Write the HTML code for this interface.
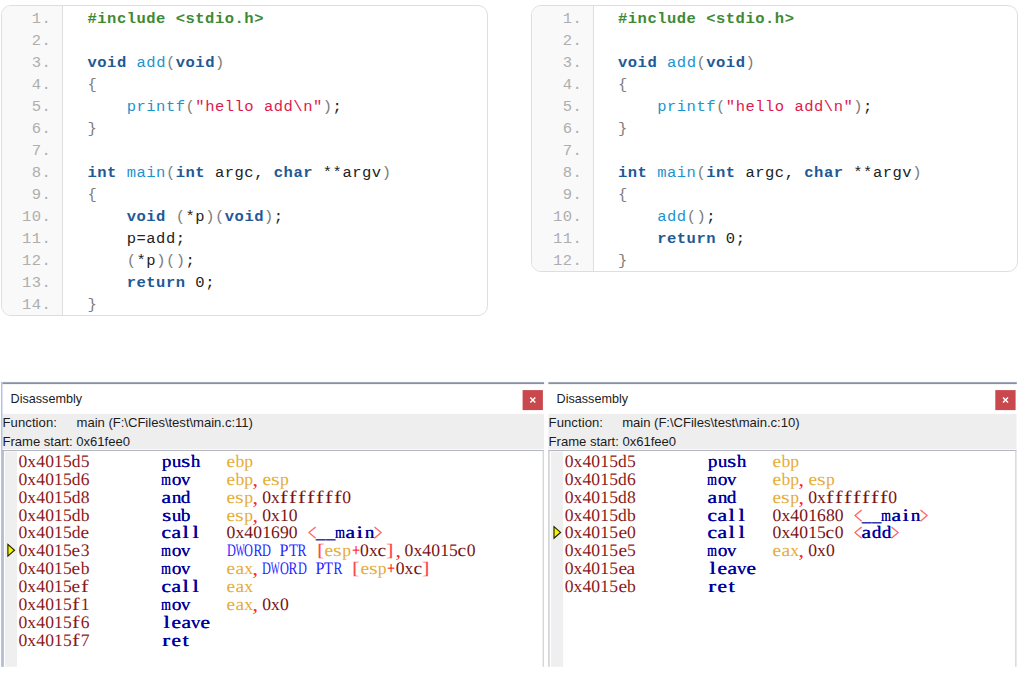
<!DOCTYPE html>
<html><head><meta charset="utf-8"><title>disassembly compare</title>
<style>
html,body{margin:0;padding:0;background:#fff;}
body{width:1025px;height:674px;position:relative;overflow:hidden;font-family:"Liberation Sans",sans-serif;}
.cb{position:absolute;border:1px solid #dedede;border-radius:10px;background:#fff;overflow:hidden;
  font-family:"Liberation Mono",monospace;font-size:15.5px;letter-spacing:0.5px;line-height:22px;color:#222;}
.gut{position:absolute;left:0;top:0;width:60px;background:#f9f9f9;border-right:1px solid #dedede;}
.ln{position:relative;height:22px;white-space:pre;}
.no{position:absolute;left:0;top:2.4px;width:49.4px;text-align:right;color:#aeaeae;}
.cd{position:absolute;left:85.5px;top:2.4px;}
.k{color:#1e5a96;font-weight:bold;}
.f{color:#1b93cf;}
.g{color:#7d7d7d;}
.s{color:#dd1a4e;}
.pp{color:#3e8a34;font-weight:bold;}
.ttl{position:absolute;top:392.2px;font-size:12.6px;line-height:15px;color:#1c1c1c;white-space:pre;}
.lbl{position:absolute;letter-spacing:-0.03px;font-size:13.1px;line-height:15px;color:#1c1c1c;white-space:pre;}
.chrome{position:absolute;left:0;top:0;}
i{position:absolute;text-rendering:geometricPrecision;font-style:normal;font-family:"Liberation Serif",serif;font-size:17.6px;line-height:0;white-space:pre;transform-origin:50% 50%;}
</style></head>
<body>
<div class="cb" style="left:1px;top:5px;width:485px;height:308.84px">
<div class="gut" style="height:308.84px;width:60px"></div>
<div class="ln"><span class="no" style="width:49.4px">1.</span><span class="cd" style="left:85.5px"><span class="pp">#include &lt;stdio.h&gt;</span></span></div>
<div class="ln"><span class="no" style="width:49.4px">2.</span><span class="cd" style="left:85.5px"></span></div>
<div class="ln"><span class="no" style="width:49.4px">3.</span><span class="cd" style="left:85.5px"><span class="k">void</span> <span class="f">add</span><span class="g">(</span><span class="k">void</span><span class="g">)</span></span></div>
<div class="ln"><span class="no" style="width:49.4px">4.</span><span class="cd" style="left:85.5px"><span class="g">{</span></span></div>
<div class="ln"><span class="no" style="width:49.4px">5.</span><span class="cd" style="left:85.5px">    <span class="f">printf</span><span class="g">(</span><span class="s">"hello add\n"</span><span class="g">)</span>;</span></div>
<div class="ln"><span class="no" style="width:49.4px">6.</span><span class="cd" style="left:85.5px"><span class="g">}</span></span></div>
<div class="ln"><span class="no" style="width:49.4px">7.</span><span class="cd" style="left:85.5px"></span></div>
<div class="ln"><span class="no" style="width:49.4px">8.</span><span class="cd" style="left:85.5px"><span class="k">int</span> <span class="f">main</span><span class="g">(</span><span class="k">int</span> argc, <span class="k">char</span> **argv<span class="g">)</span></span></div>
<div class="ln"><span class="no" style="width:49.4px">9.</span><span class="cd" style="left:85.5px"><span class="g">{</span></span></div>
<div class="ln"><span class="no" style="width:49.4px">10.</span><span class="cd" style="left:85.5px">    <span class="k">void</span> <span class="g">(</span>*p<span class="g">)</span><span class="g">(</span><span class="k">void</span><span class="g">)</span>;</span></div>
<div class="ln"><span class="no" style="width:49.4px">11.</span><span class="cd" style="left:85.5px">    p=add;</span></div>
<div class="ln"><span class="no" style="width:49.4px">12.</span><span class="cd" style="left:85.5px">    <span class="g">(</span>*p<span class="g">)</span><span class="g">()</span>;</span></div>
<div class="ln"><span class="no" style="width:49.4px">13.</span><span class="cd" style="left:85.5px">    <span class="k">return</span> 0;</span></div>
<div class="ln"><span class="no" style="width:49.4px">14.</span><span class="cd" style="left:85.5px"><span class="g">}</span></span></div>
</div>
<div class="cb" style="left:531px;top:5px;width:485px;height:264.72px">
<div class="gut" style="height:264.72px;width:61px"></div>
<div class="ln"><span class="no" style="width:50.4px">1.</span><span class="cd" style="left:86px"><span class="pp">#include &lt;stdio.h&gt;</span></span></div>
<div class="ln"><span class="no" style="width:50.4px">2.</span><span class="cd" style="left:86px"></span></div>
<div class="ln"><span class="no" style="width:50.4px">3.</span><span class="cd" style="left:86px"><span class="k">void</span> <span class="f">add</span><span class="g">(</span><span class="k">void</span><span class="g">)</span></span></div>
<div class="ln"><span class="no" style="width:50.4px">4.</span><span class="cd" style="left:86px"><span class="g">{</span></span></div>
<div class="ln"><span class="no" style="width:50.4px">5.</span><span class="cd" style="left:86px">    <span class="f">printf</span><span class="g">(</span><span class="s">"hello add\n"</span><span class="g">)</span>;</span></div>
<div class="ln"><span class="no" style="width:50.4px">6.</span><span class="cd" style="left:86px"><span class="g">}</span></span></div>
<div class="ln"><span class="no" style="width:50.4px">7.</span><span class="cd" style="left:86px"></span></div>
<div class="ln"><span class="no" style="width:50.4px">8.</span><span class="cd" style="left:86px"><span class="k">int</span> <span class="f">main</span><span class="g">(</span><span class="k">int</span> argc, <span class="k">char</span> **argv<span class="g">)</span></span></div>
<div class="ln"><span class="no" style="width:50.4px">9.</span><span class="cd" style="left:86px"><span class="g">{</span></span></div>
<div class="ln"><span class="no" style="width:50.4px">10.</span><span class="cd" style="left:86px">    <span class="f">add</span><span class="g">()</span>;</span></div>
<div class="ln"><span class="no" style="width:50.4px">11.</span><span class="cd" style="left:86px">    <span class="k">return</span> 0;</span></div>
<div class="ln"><span class="no" style="width:50.4px">12.</span><span class="cd" style="left:86px"><span class="g">}</span></span></div>
</div>
<svg class="chrome" width="1025" height="674" viewBox="0 0 1025 674"><rect x="2.30" y="413.90" width="541.60" height="35.40" fill="#eeeeee"/><rect x="1.00" y="381.90" width="543.10" height="1.00" fill="#c3cde4"/><rect x="2.30" y="382.40" width="541.80" height="1.70" fill="#8d8f98"/><rect x="1.00" y="382.00" width="1.50" height="284.80" fill="#b6c3e0"/><rect x="2.30" y="450.00" width="541.40" height="1.00" fill="#b4b7c2"/><rect x="2.30" y="450.00" width="1.50" height="216.80" fill="#a9b2c8"/><rect x="542.70" y="450.00" width="1.00" height="216.80" fill="#c4c6ce"/><rect x="4.90" y="451.50" width="12.10" height="215.30" fill="#efefef"/><rect x="522.60" y="390.10" width="20.30" height="20.00" fill="#c8484e"/><path d="M530.30 397.5 l5 5 m0 -5 l-5 5" stroke="#fff" stroke-width="1.5" fill="none"/><path d="M7.90 544.45 l6.6 5.8 l-6.6 5.8 Z" fill="#f4f400" stroke="#1a1a00" stroke-width="1.1" stroke-linejoin="miter"/></svg>
<div class="ttl" style="left:10.6px">Disassembly</div>
<div class="lbl" style="left:2.5px;top:415.2px;letter-spacing:0.07px">Function:</div>
<div class="lbl" style="left:76.6px;top:415.2px">main (F:\CFiles\test\main.c:11)</div>
<div class="lbl" style="left:2.5px;top:434px">Frame start: 0x61fee0</div>
<i style="left:18.45px;top:461.31px;color:#8b1a1a;">0</i><i style="left:27.35px;top:461.31px;color:#8b1a1a;">x</i><i style="left:36.25px;top:461.31px;color:#8b1a1a;">4</i><i style="left:45.15px;top:461.31px;color:#8b1a1a;">0</i><i style="left:54.05px;top:461.31px;color:#8b1a1a;">1</i><i style="left:62.95px;top:461.31px;color:#8b1a1a;">5</i><i style="left:71.85px;top:461.31px;color:#8b1a1a;">d</i><i style="left:80.75px;top:461.31px;color:#8b1a1a;">5</i><i style="left:161.80px;top:461.31px;color:#00009c;text-shadow:0.4px 0 0 #00009c;transform:scale(1.079,1.000);">p</i><i style="left:171.59px;top:461.31px;color:#00009c;text-shadow:0.4px 0 0 #00009c;transform:scale(1.079,1.000);">u</i><i style="left:182.35px;top:461.31px;color:#00009c;text-shadow:0.4px 0 0 #00009c;transform:scale(1.300,1.000);">s</i><i style="left:191.16px;top:461.31px;color:#00009c;text-shadow:0.4px 0 0 #00009c;transform:scale(1.079,1.000);">h</i><i style="left:227.04px;top:461.31px;color:#e6ac38;transform:scale(1.105,1.000);">e</i><i style="left:235.45px;top:461.31px;color:#e6ac38;">b</i><i style="left:244.35px;top:461.31px;color:#e6ac38;">p</i>
<i style="left:18.45px;top:479.31px;color:#8b1a1a;">0</i><i style="left:27.35px;top:479.31px;color:#8b1a1a;">x</i><i style="left:36.25px;top:479.31px;color:#8b1a1a;">4</i><i style="left:45.15px;top:479.31px;color:#8b1a1a;">0</i><i style="left:54.05px;top:479.31px;color:#8b1a1a;">1</i><i style="left:62.95px;top:479.31px;color:#8b1a1a;">5</i><i style="left:71.85px;top:479.31px;color:#8b1a1a;">d</i><i style="left:80.75px;top:479.31px;color:#8b1a1a;">6</i><i style="left:159.35px;top:479.31px;color:#00009c;text-shadow:0.4px 0 0 #00009c;transform:scale(0.715,1.000);">m</i><i style="left:171.59px;top:479.31px;color:#00009c;text-shadow:0.4px 0 0 #00009c;transform:scale(1.079,1.000);">o</i><i style="left:181.38px;top:479.31px;color:#00009c;text-shadow:0.4px 0 0 #00009c;transform:scale(1.079,1.000);">v</i><i style="left:227.04px;top:479.31px;color:#e6ac38;transform:scale(1.105,1.000);">e</i><i style="left:235.45px;top:479.31px;color:#e6ac38;">b</i><i style="left:244.35px;top:479.31px;color:#e6ac38;">p</i><i style="left:253.45px;top:479.31px;color:#ff2020;transform:scale(1.250,1.100);">,</i><i style="left:262.64px;top:479.31px;color:#e6ac38;transform:scale(1.105,1.000);">e</i><i style="left:272.03px;top:479.31px;color:#e6ac38;transform:scale(1.260,1.000);">s</i><i style="left:279.95px;top:479.31px;color:#e6ac38;">p</i>
<i style="left:18.45px;top:497.31px;color:#8b1a1a;">0</i><i style="left:27.35px;top:497.31px;color:#8b1a1a;">x</i><i style="left:36.25px;top:497.31px;color:#8b1a1a;">4</i><i style="left:45.15px;top:497.31px;color:#8b1a1a;">0</i><i style="left:54.05px;top:497.31px;color:#8b1a1a;">1</i><i style="left:62.95px;top:497.31px;color:#8b1a1a;">5</i><i style="left:71.85px;top:497.31px;color:#8b1a1a;">d</i><i style="left:80.75px;top:497.31px;color:#8b1a1a;">8</i><i style="left:162.29px;top:497.31px;color:#00009c;text-shadow:0.4px 0 0 #00009c;transform:scale(1.216,1.000);">a</i><i style="left:171.59px;top:497.31px;color:#00009c;text-shadow:0.4px 0 0 #00009c;transform:scale(1.079,1.000);">n</i><i style="left:181.38px;top:497.31px;color:#00009c;text-shadow:0.4px 0 0 #00009c;transform:scale(1.079,1.000);">d</i><i style="left:227.04px;top:497.31px;color:#e6ac38;transform:scale(1.105,1.000);">e</i><i style="left:236.43px;top:497.31px;color:#e6ac38;transform:scale(1.260,1.000);">s</i><i style="left:244.35px;top:497.31px;color:#e6ac38;">p</i><i style="left:253.45px;top:497.31px;color:#ff2020;transform:scale(1.250,1.100);">,</i><i style="left:262.15px;top:497.31px;color:#7a1414;">0</i><i style="left:271.05px;top:497.31px;color:#7a1414;">x</i><i style="left:281.42px;top:497.31px;color:#7a1414;transform:scale(1.300,1.000);">f</i><i style="left:290.32px;top:497.31px;color:#7a1414;transform:scale(1.300,1.000);">f</i><i style="left:299.22px;top:497.31px;color:#7a1414;transform:scale(1.300,1.000);">f</i><i style="left:308.12px;top:497.31px;color:#7a1414;transform:scale(1.300,1.000);">f</i><i style="left:317.02px;top:497.31px;color:#7a1414;transform:scale(1.300,1.000);">f</i><i style="left:325.92px;top:497.31px;color:#7a1414;transform:scale(1.300,1.000);">f</i><i style="left:334.82px;top:497.31px;color:#7a1414;transform:scale(1.300,1.000);">f</i><i style="left:342.25px;top:497.31px;color:#7a1414;">0</i>
<i style="left:18.45px;top:515.31px;color:#8b1a1a;">0</i><i style="left:27.35px;top:515.31px;color:#8b1a1a;">x</i><i style="left:36.25px;top:515.31px;color:#8b1a1a;">4</i><i style="left:45.15px;top:515.31px;color:#8b1a1a;">0</i><i style="left:54.05px;top:515.31px;color:#8b1a1a;">1</i><i style="left:62.95px;top:515.31px;color:#8b1a1a;">5</i><i style="left:71.85px;top:515.31px;color:#8b1a1a;">d</i><i style="left:80.75px;top:515.31px;color:#8b1a1a;">b</i><i style="left:162.77px;top:515.31px;color:#00009c;text-shadow:0.4px 0 0 #00009c;transform:scale(1.300,1.000);">s</i><i style="left:171.59px;top:515.31px;color:#00009c;text-shadow:0.4px 0 0 #00009c;transform:scale(1.079,1.000);">u</i><i style="left:181.38px;top:515.31px;color:#00009c;text-shadow:0.4px 0 0 #00009c;transform:scale(1.079,1.000);">b</i><i style="left:227.04px;top:515.31px;color:#e6ac38;transform:scale(1.105,1.000);">e</i><i style="left:236.43px;top:515.31px;color:#e6ac38;transform:scale(1.260,1.000);">s</i><i style="left:244.35px;top:515.31px;color:#e6ac38;">p</i><i style="left:253.45px;top:515.31px;color:#ff2020;transform:scale(1.250,1.100);">,</i><i style="left:262.15px;top:515.31px;color:#7a1414;">0</i><i style="left:271.05px;top:515.31px;color:#7a1414;">x</i><i style="left:279.95px;top:515.31px;color:#7a1414;">1</i><i style="left:288.85px;top:515.31px;color:#7a1414;">0</i>
<i style="left:18.45px;top:532.31px;color:#8b1a1a;">0</i><i style="left:27.35px;top:532.31px;color:#8b1a1a;">x</i><i style="left:36.25px;top:532.31px;color:#8b1a1a;">4</i><i style="left:45.15px;top:532.31px;color:#8b1a1a;">0</i><i style="left:54.05px;top:532.31px;color:#8b1a1a;">1</i><i style="left:62.95px;top:532.31px;color:#8b1a1a;">5</i><i style="left:71.85px;top:532.31px;color:#8b1a1a;">d</i><i style="left:81.24px;top:532.31px;color:#8b1a1a;transform:scale(1.105,1.000);">e</i><i style="left:162.29px;top:532.31px;color:#00009c;text-shadow:0.4px 0 0 #00009c;transform:scale(1.216,1.000);">c</i><i style="left:172.08px;top:532.31px;color:#00009c;text-shadow:0.4px 0 0 #00009c;transform:scale(1.216,1.000);">a</i><i style="left:183.33px;top:532.31px;color:#00009c;text-shadow:0.4px 0 0 #00009c;transform:scale(1.300,1.000);">l</i><i style="left:193.12px;top:532.31px;color:#00009c;text-shadow:0.4px 0 0 #00009c;transform:scale(1.300,1.000);">l</i><i style="left:226.55px;top:532.31px;color:#7a1414;">0</i><i style="left:235.45px;top:532.31px;color:#7a1414;">x</i><i style="left:244.35px;top:532.31px;color:#7a1414;">4</i><i style="left:253.25px;top:532.31px;color:#7a1414;">0</i><i style="left:262.15px;top:532.31px;color:#7a1414;">1</i><i style="left:271.05px;top:532.31px;color:#7a1414;">6</i><i style="left:279.95px;top:532.31px;color:#7a1414;">9</i><i style="left:288.85px;top:532.31px;color:#7a1414;">0</i><i style="left:306.99px;top:532.21px;color:#ff6a6a;text-shadow:0.3px 0 0 #ff6a6a;transform:scale(0.850,1.450);">&lt;</i><i style="left:315.99px;top:532.31px;color:#00009c;text-shadow:0.4px 0 0 #00009c;transform:scale(1.079,1.000);">_</i><i style="left:325.78px;top:532.31px;color:#00009c;text-shadow:0.4px 0 0 #00009c;transform:scale(1.079,1.000);">_</i><i style="left:333.13px;top:532.31px;color:#00009c;text-shadow:0.4px 0 0 #00009c;transform:scale(0.715,1.000);">m</i><i style="left:345.86px;top:532.31px;color:#00009c;text-shadow:0.4px 0 0 #00009c;transform:scale(1.216,1.000);">a</i><i style="left:357.11px;top:532.31px;color:#00009c;text-shadow:0.4px 0 0 #00009c;transform:scale(1.300,1.000);">i</i><i style="left:364.94px;top:532.31px;color:#00009c;text-shadow:0.4px 0 0 #00009c;transform:scale(1.079,1.000);">n</i><i style="left:373.43px;top:532.21px;color:#ff6a6a;text-shadow:0.3px 0 0 #ff6a6a;transform:scale(0.850,1.450);">&gt;</i>
<i style="left:18.45px;top:550.31px;color:#8b1a1a;">0</i><i style="left:27.35px;top:550.31px;color:#8b1a1a;">x</i><i style="left:36.25px;top:550.31px;color:#8b1a1a;">4</i><i style="left:45.15px;top:550.31px;color:#8b1a1a;">0</i><i style="left:54.05px;top:550.31px;color:#8b1a1a;">1</i><i style="left:62.95px;top:550.31px;color:#8b1a1a;">5</i><i style="left:72.34px;top:550.31px;color:#8b1a1a;transform:scale(1.105,1.000);">e</i><i style="left:80.75px;top:550.31px;color:#8b1a1a;">3</i><i style="left:159.35px;top:550.31px;color:#00009c;text-shadow:0.4px 0 0 #00009c;transform:scale(0.715,1.000);">m</i><i style="left:171.59px;top:550.31px;color:#00009c;text-shadow:0.4px 0 0 #00009c;transform:scale(1.079,1.000);">o</i><i style="left:181.38px;top:550.31px;color:#00009c;text-shadow:0.4px 0 0 #00009c;transform:scale(1.079,1.000);">v</i><i style="left:224.59px;top:550.31px;color:#2424ff;transform:scale(0.700,1.000);">D</i><i style="left:231.54px;top:550.31px;color:#2424ff;transform:scale(0.536,1.000);">W</i><i style="left:242.39px;top:550.31px;color:#2424ff;transform:scale(0.700,1.000);">O</i><i style="left:251.78px;top:550.31px;color:#2424ff;transform:scale(0.758,1.000);">R</i><i style="left:260.19px;top:550.31px;color:#2424ff;transform:scale(0.700,1.000);">D</i><i style="left:279.46px;top:550.31px;color:#2424ff;transform:scale(0.909,1.000);">P</i><i style="left:287.87px;top:550.31px;color:#2424ff;transform:scale(0.828,1.000);">T</i><i style="left:296.28px;top:550.31px;color:#2424ff;transform:scale(0.758,1.000);">R</i><i style="left:317.52px;top:550.31px;color:#ff4848;transform:scale(1.300,1.000);">[</i><i style="left:324.94px;top:550.31px;color:#e6ac38;transform:scale(1.105,1.000);">e</i><i style="left:334.33px;top:550.31px;color:#e6ac38;transform:scale(1.260,1.000);">s</i><i style="left:342.25px;top:550.31px;color:#e6ac38;">p</i><i style="left:350.59px;top:550.31px;color:#ff3030;text-shadow:0.3px 0 0 #ff3030;transform:scale(0.800,1.000);">+</i><i style="left:360.05px;top:550.31px;color:#7a1414;">0</i><i style="left:368.95px;top:550.31px;color:#7a1414;">x</i><i style="left:378.34px;top:550.31px;color:#7a1414;transform:scale(1.105,1.000);">c</i><i style="left:387.22px;top:550.31px;color:#ff4848;transform:scale(1.300,1.000);">]</i><i style="left:395.85px;top:550.31px;color:#ff2020;transform:scale(1.250,1.100);">,</i><i style="left:404.55px;top:550.31px;color:#7a1414;">0</i><i style="left:413.45px;top:550.31px;color:#7a1414;">x</i><i style="left:422.35px;top:550.31px;color:#7a1414;">4</i><i style="left:431.25px;top:550.31px;color:#7a1414;">0</i><i style="left:440.15px;top:550.31px;color:#7a1414;">1</i><i style="left:449.05px;top:550.31px;color:#7a1414;">5</i><i style="left:458.44px;top:550.31px;color:#7a1414;transform:scale(1.105,1.000);">c</i><i style="left:466.85px;top:550.31px;color:#7a1414;">0</i>
<i style="left:18.45px;top:568.31px;color:#8b1a1a;">0</i><i style="left:27.35px;top:568.31px;color:#8b1a1a;">x</i><i style="left:36.25px;top:568.31px;color:#8b1a1a;">4</i><i style="left:45.15px;top:568.31px;color:#8b1a1a;">0</i><i style="left:54.05px;top:568.31px;color:#8b1a1a;">1</i><i style="left:62.95px;top:568.31px;color:#8b1a1a;">5</i><i style="left:72.34px;top:568.31px;color:#8b1a1a;transform:scale(1.105,1.000);">e</i><i style="left:80.75px;top:568.31px;color:#8b1a1a;">b</i><i style="left:159.35px;top:568.31px;color:#00009c;text-shadow:0.4px 0 0 #00009c;transform:scale(0.715,1.000);">m</i><i style="left:171.59px;top:568.31px;color:#00009c;text-shadow:0.4px 0 0 #00009c;transform:scale(1.079,1.000);">o</i><i style="left:181.38px;top:568.31px;color:#00009c;text-shadow:0.4px 0 0 #00009c;transform:scale(1.079,1.000);">v</i><i style="left:227.04px;top:568.31px;color:#e6ac38;transform:scale(1.105,1.000);">e</i><i style="left:235.94px;top:568.31px;color:#e6ac38;transform:scale(1.105,1.000);">a</i><i style="left:244.35px;top:568.31px;color:#e6ac38;">x</i><i style="left:253.45px;top:568.31px;color:#ff2020;transform:scale(1.250,1.100);">,</i><i style="left:260.19px;top:568.31px;color:#2424ff;transform:scale(0.700,1.000);">D</i><i style="left:267.14px;top:568.31px;color:#2424ff;transform:scale(0.536,1.000);">W</i><i style="left:277.99px;top:568.31px;color:#2424ff;transform:scale(0.700,1.000);">O</i><i style="left:287.38px;top:568.31px;color:#2424ff;transform:scale(0.758,1.000);">R</i><i style="left:295.79px;top:568.31px;color:#2424ff;transform:scale(0.700,1.000);">D</i><i style="left:315.06px;top:568.31px;color:#2424ff;transform:scale(0.909,1.000);">P</i><i style="left:323.47px;top:568.31px;color:#2424ff;transform:scale(0.828,1.000);">T</i><i style="left:331.88px;top:568.31px;color:#2424ff;transform:scale(0.758,1.000);">R</i><i style="left:353.12px;top:568.31px;color:#ff4848;transform:scale(1.300,1.000);">[</i><i style="left:360.54px;top:568.31px;color:#e6ac38;transform:scale(1.105,1.000);">e</i><i style="left:369.93px;top:568.31px;color:#e6ac38;transform:scale(1.260,1.000);">s</i><i style="left:377.85px;top:568.31px;color:#e6ac38;">p</i><i style="left:386.19px;top:568.31px;color:#ff3030;text-shadow:0.3px 0 0 #ff3030;transform:scale(0.800,1.000);">+</i><i style="left:395.65px;top:568.31px;color:#7a1414;">0</i><i style="left:404.55px;top:568.31px;color:#7a1414;">x</i><i style="left:413.94px;top:568.31px;color:#7a1414;transform:scale(1.105,1.000);">c</i><i style="left:422.82px;top:568.31px;color:#ff4848;transform:scale(1.300,1.000);">]</i>
<i style="left:18.45px;top:586.31px;color:#8b1a1a;">0</i><i style="left:27.35px;top:586.31px;color:#8b1a1a;">x</i><i style="left:36.25px;top:586.31px;color:#8b1a1a;">4</i><i style="left:45.15px;top:586.31px;color:#8b1a1a;">0</i><i style="left:54.05px;top:586.31px;color:#8b1a1a;">1</i><i style="left:62.95px;top:586.31px;color:#8b1a1a;">5</i><i style="left:72.34px;top:586.31px;color:#8b1a1a;transform:scale(1.105,1.000);">e</i><i style="left:82.22px;top:586.31px;color:#8b1a1a;transform:scale(1.300,1.000);">f</i><i style="left:162.29px;top:586.31px;color:#00009c;text-shadow:0.4px 0 0 #00009c;transform:scale(1.216,1.000);">c</i><i style="left:172.08px;top:586.31px;color:#00009c;text-shadow:0.4px 0 0 #00009c;transform:scale(1.216,1.000);">a</i><i style="left:183.33px;top:586.31px;color:#00009c;text-shadow:0.4px 0 0 #00009c;transform:scale(1.300,1.000);">l</i><i style="left:193.12px;top:586.31px;color:#00009c;text-shadow:0.4px 0 0 #00009c;transform:scale(1.300,1.000);">l</i><i style="left:227.04px;top:586.31px;color:#e6ac38;transform:scale(1.105,1.000);">e</i><i style="left:235.94px;top:586.31px;color:#e6ac38;transform:scale(1.105,1.000);">a</i><i style="left:244.35px;top:586.31px;color:#e6ac38;">x</i>
<i style="left:18.45px;top:604.31px;color:#8b1a1a;">0</i><i style="left:27.35px;top:604.31px;color:#8b1a1a;">x</i><i style="left:36.25px;top:604.31px;color:#8b1a1a;">4</i><i style="left:45.15px;top:604.31px;color:#8b1a1a;">0</i><i style="left:54.05px;top:604.31px;color:#8b1a1a;">1</i><i style="left:62.95px;top:604.31px;color:#8b1a1a;">5</i><i style="left:73.32px;top:604.31px;color:#8b1a1a;transform:scale(1.300,1.000);">f</i><i style="left:80.75px;top:604.31px;color:#8b1a1a;">1</i><i style="left:159.35px;top:604.31px;color:#00009c;text-shadow:0.4px 0 0 #00009c;transform:scale(0.715,1.000);">m</i><i style="left:171.59px;top:604.31px;color:#00009c;text-shadow:0.4px 0 0 #00009c;transform:scale(1.079,1.000);">o</i><i style="left:181.38px;top:604.31px;color:#00009c;text-shadow:0.4px 0 0 #00009c;transform:scale(1.079,1.000);">v</i><i style="left:227.04px;top:604.31px;color:#e6ac38;transform:scale(1.105,1.000);">e</i><i style="left:235.94px;top:604.31px;color:#e6ac38;transform:scale(1.105,1.000);">a</i><i style="left:244.35px;top:604.31px;color:#e6ac38;">x</i><i style="left:253.45px;top:604.31px;color:#ff2020;transform:scale(1.250,1.100);">,</i><i style="left:262.15px;top:604.31px;color:#7a1414;">0</i><i style="left:271.05px;top:604.31px;color:#7a1414;">x</i><i style="left:279.95px;top:604.31px;color:#7a1414;">0</i>
<i style="left:18.45px;top:622.31px;color:#8b1a1a;">0</i><i style="left:27.35px;top:622.31px;color:#8b1a1a;">x</i><i style="left:36.25px;top:622.31px;color:#8b1a1a;">4</i><i style="left:45.15px;top:622.31px;color:#8b1a1a;">0</i><i style="left:54.05px;top:622.31px;color:#8b1a1a;">1</i><i style="left:62.95px;top:622.31px;color:#8b1a1a;">5</i><i style="left:73.32px;top:622.31px;color:#8b1a1a;transform:scale(1.300,1.000);">f</i><i style="left:80.75px;top:622.31px;color:#8b1a1a;">6</i><i style="left:163.75px;top:622.31px;color:#00009c;text-shadow:0.4px 0 0 #00009c;transform:scale(1.300,1.000);">l</i><i style="left:172.08px;top:622.31px;color:#00009c;text-shadow:0.4px 0 0 #00009c;transform:scale(1.216,1.000);">e</i><i style="left:181.87px;top:622.31px;color:#00009c;text-shadow:0.4px 0 0 #00009c;transform:scale(1.216,1.000);">a</i><i style="left:191.16px;top:622.31px;color:#00009c;text-shadow:0.4px 0 0 #00009c;transform:scale(1.079,1.000);">v</i><i style="left:201.45px;top:622.31px;color:#00009c;text-shadow:0.4px 0 0 #00009c;transform:scale(1.216,1.000);">e</i>
<i style="left:18.45px;top:640.31px;color:#8b1a1a;">0</i><i style="left:27.35px;top:640.31px;color:#8b1a1a;">x</i><i style="left:36.25px;top:640.31px;color:#8b1a1a;">4</i><i style="left:45.15px;top:640.31px;color:#8b1a1a;">0</i><i style="left:54.05px;top:640.31px;color:#8b1a1a;">1</i><i style="left:62.95px;top:640.31px;color:#8b1a1a;">5</i><i style="left:73.32px;top:640.31px;color:#8b1a1a;transform:scale(1.300,1.000);">f</i><i style="left:80.75px;top:640.31px;color:#8b1a1a;">7</i><i style="left:163.26px;top:640.31px;color:#00009c;text-shadow:0.4px 0 0 #00009c;transform:scale(1.300,1.000);">r</i><i style="left:172.08px;top:640.31px;color:#00009c;text-shadow:0.4px 0 0 #00009c;transform:scale(1.216,1.000);">e</i><i style="left:183.33px;top:640.31px;color:#00009c;text-shadow:0.4px 0 0 #00009c;transform:scale(1.300,1.000);">t</i>
<svg class="chrome" width="1025" height="674" viewBox="0 0 1025 674"><rect x="548.40" y="413.90" width="468.20" height="35.40" fill="#eeeeee"/><rect x="548.40" y="381.90" width="468.40" height="1.00" fill="#c3cde4"/><rect x="548.40" y="382.40" width="468.40" height="1.70" fill="#8d8f98"/><rect x="548.40" y="450.00" width="468.00" height="1.00" fill="#b4b7c2"/><rect x="548.40" y="450.00" width="1.10" height="216.80" fill="#b9bcc6"/><rect x="1015.40" y="450.00" width="1.00" height="216.80" fill="#c4c6ce"/><rect x="551.00" y="451.50" width="12.10" height="215.30" fill="#efefef"/><rect x="995.30" y="390.10" width="20.30" height="20.00" fill="#c8484e"/><path d="M1003.00 397.5 l5 5 m0 -5 l-5 5" stroke="#fff" stroke-width="1.5" fill="none"/><path d="M554.00 526.60 l6.6 5.8 l-6.6 5.8 Z" fill="#f4f400" stroke="#1a1a00" stroke-width="1.1" stroke-linejoin="miter"/></svg>
<div class="ttl" style="left:556.6px">Disassembly</div>
<div class="lbl" style="left:548.6px;top:415.2px;letter-spacing:0.07px">Function:</div>
<div class="lbl" style="left:622.2px;top:415.2px">main (F:\CFiles\test\main.c:10)</div>
<div class="lbl" style="left:548.6px;top:434px">Frame start: 0x61fee0</div>
<i style="left:564.65px;top:461.31px;color:#8b1a1a;">0</i><i style="left:573.55px;top:461.31px;color:#8b1a1a;">x</i><i style="left:582.45px;top:461.31px;color:#8b1a1a;">4</i><i style="left:591.35px;top:461.31px;color:#8b1a1a;">0</i><i style="left:600.25px;top:461.31px;color:#8b1a1a;">1</i><i style="left:609.15px;top:461.31px;color:#8b1a1a;">5</i><i style="left:618.05px;top:461.31px;color:#8b1a1a;">d</i><i style="left:626.95px;top:461.31px;color:#8b1a1a;">5</i><i style="left:707.79px;top:461.31px;color:#00009c;text-shadow:0.4px 0 0 #00009c;transform:scale(1.079,1.000);">p</i><i style="left:717.58px;top:461.31px;color:#00009c;text-shadow:0.4px 0 0 #00009c;transform:scale(1.079,1.000);">u</i><i style="left:728.35px;top:461.31px;color:#00009c;text-shadow:0.4px 0 0 #00009c;transform:scale(1.300,1.000);">s</i><i style="left:737.16px;top:461.31px;color:#00009c;text-shadow:0.4px 0 0 #00009c;transform:scale(1.079,1.000);">h</i><i style="left:773.04px;top:461.31px;color:#e6ac38;transform:scale(1.105,1.000);">e</i><i style="left:781.45px;top:461.31px;color:#e6ac38;">b</i><i style="left:790.35px;top:461.31px;color:#e6ac38;">p</i>
<i style="left:564.65px;top:479.31px;color:#8b1a1a;">0</i><i style="left:573.55px;top:479.31px;color:#8b1a1a;">x</i><i style="left:582.45px;top:479.31px;color:#8b1a1a;">4</i><i style="left:591.35px;top:479.31px;color:#8b1a1a;">0</i><i style="left:600.25px;top:479.31px;color:#8b1a1a;">1</i><i style="left:609.15px;top:479.31px;color:#8b1a1a;">5</i><i style="left:618.05px;top:479.31px;color:#8b1a1a;">d</i><i style="left:626.95px;top:479.31px;color:#8b1a1a;">6</i><i style="left:705.35px;top:479.31px;color:#00009c;text-shadow:0.4px 0 0 #00009c;transform:scale(0.715,1.000);">m</i><i style="left:717.58px;top:479.31px;color:#00009c;text-shadow:0.4px 0 0 #00009c;transform:scale(1.079,1.000);">o</i><i style="left:727.37px;top:479.31px;color:#00009c;text-shadow:0.4px 0 0 #00009c;transform:scale(1.079,1.000);">v</i><i style="left:773.04px;top:479.31px;color:#e6ac38;transform:scale(1.105,1.000);">e</i><i style="left:781.45px;top:479.31px;color:#e6ac38;">b</i><i style="left:790.35px;top:479.31px;color:#e6ac38;">p</i><i style="left:799.45px;top:479.31px;color:#ff2020;transform:scale(1.250,1.100);">,</i><i style="left:808.64px;top:479.31px;color:#e6ac38;transform:scale(1.105,1.000);">e</i><i style="left:818.03px;top:479.31px;color:#e6ac38;transform:scale(1.260,1.000);">s</i><i style="left:825.95px;top:479.31px;color:#e6ac38;">p</i>
<i style="left:564.65px;top:497.31px;color:#8b1a1a;">0</i><i style="left:573.55px;top:497.31px;color:#8b1a1a;">x</i><i style="left:582.45px;top:497.31px;color:#8b1a1a;">4</i><i style="left:591.35px;top:497.31px;color:#8b1a1a;">0</i><i style="left:600.25px;top:497.31px;color:#8b1a1a;">1</i><i style="left:609.15px;top:497.31px;color:#8b1a1a;">5</i><i style="left:618.05px;top:497.31px;color:#8b1a1a;">d</i><i style="left:626.95px;top:497.31px;color:#8b1a1a;">8</i><i style="left:708.29px;top:497.31px;color:#00009c;text-shadow:0.4px 0 0 #00009c;transform:scale(1.216,1.000);">a</i><i style="left:717.58px;top:497.31px;color:#00009c;text-shadow:0.4px 0 0 #00009c;transform:scale(1.079,1.000);">n</i><i style="left:727.37px;top:497.31px;color:#00009c;text-shadow:0.4px 0 0 #00009c;transform:scale(1.079,1.000);">d</i><i style="left:773.04px;top:497.31px;color:#e6ac38;transform:scale(1.105,1.000);">e</i><i style="left:782.43px;top:497.31px;color:#e6ac38;transform:scale(1.260,1.000);">s</i><i style="left:790.35px;top:497.31px;color:#e6ac38;">p</i><i style="left:799.45px;top:497.31px;color:#ff2020;transform:scale(1.250,1.100);">,</i><i style="left:808.15px;top:497.31px;color:#7a1414;">0</i><i style="left:817.05px;top:497.31px;color:#7a1414;">x</i><i style="left:827.42px;top:497.31px;color:#7a1414;transform:scale(1.300,1.000);">f</i><i style="left:836.32px;top:497.31px;color:#7a1414;transform:scale(1.300,1.000);">f</i><i style="left:845.22px;top:497.31px;color:#7a1414;transform:scale(1.300,1.000);">f</i><i style="left:854.12px;top:497.31px;color:#7a1414;transform:scale(1.300,1.000);">f</i><i style="left:863.02px;top:497.31px;color:#7a1414;transform:scale(1.300,1.000);">f</i><i style="left:871.92px;top:497.31px;color:#7a1414;transform:scale(1.300,1.000);">f</i><i style="left:880.82px;top:497.31px;color:#7a1414;transform:scale(1.300,1.000);">f</i><i style="left:888.25px;top:497.31px;color:#7a1414;">0</i>
<i style="left:564.65px;top:515.31px;color:#8b1a1a;">0</i><i style="left:573.55px;top:515.31px;color:#8b1a1a;">x</i><i style="left:582.45px;top:515.31px;color:#8b1a1a;">4</i><i style="left:591.35px;top:515.31px;color:#8b1a1a;">0</i><i style="left:600.25px;top:515.31px;color:#8b1a1a;">1</i><i style="left:609.15px;top:515.31px;color:#8b1a1a;">5</i><i style="left:618.05px;top:515.31px;color:#8b1a1a;">d</i><i style="left:626.95px;top:515.31px;color:#8b1a1a;">b</i><i style="left:708.29px;top:515.31px;color:#00009c;text-shadow:0.4px 0 0 #00009c;transform:scale(1.216,1.000);">c</i><i style="left:718.08px;top:515.31px;color:#00009c;text-shadow:0.4px 0 0 #00009c;transform:scale(1.216,1.000);">a</i><i style="left:729.33px;top:515.31px;color:#00009c;text-shadow:0.4px 0 0 #00009c;transform:scale(1.300,1.000);">l</i><i style="left:739.12px;top:515.31px;color:#00009c;text-shadow:0.4px 0 0 #00009c;transform:scale(1.300,1.000);">l</i><i style="left:772.55px;top:515.31px;color:#7a1414;">0</i><i style="left:781.45px;top:515.31px;color:#7a1414;">x</i><i style="left:790.35px;top:515.31px;color:#7a1414;">4</i><i style="left:799.25px;top:515.31px;color:#7a1414;">0</i><i style="left:808.15px;top:515.31px;color:#7a1414;">1</i><i style="left:817.05px;top:515.31px;color:#7a1414;">6</i><i style="left:825.95px;top:515.31px;color:#7a1414;">8</i><i style="left:834.85px;top:515.31px;color:#7a1414;">0</i><i style="left:852.99px;top:515.21px;color:#ff6a6a;text-shadow:0.3px 0 0 #ff6a6a;transform:scale(0.850,1.450);">&lt;</i><i style="left:861.99px;top:515.31px;color:#00009c;text-shadow:0.4px 0 0 #00009c;transform:scale(1.079,1.000);">_</i><i style="left:871.78px;top:515.31px;color:#00009c;text-shadow:0.4px 0 0 #00009c;transform:scale(1.079,1.000);">_</i><i style="left:879.13px;top:515.31px;color:#00009c;text-shadow:0.4px 0 0 #00009c;transform:scale(0.715,1.000);">m</i><i style="left:891.86px;top:515.31px;color:#00009c;text-shadow:0.4px 0 0 #00009c;transform:scale(1.216,1.000);">a</i><i style="left:903.11px;top:515.31px;color:#00009c;text-shadow:0.4px 0 0 #00009c;transform:scale(1.300,1.000);">i</i><i style="left:910.94px;top:515.31px;color:#00009c;text-shadow:0.4px 0 0 #00009c;transform:scale(1.079,1.000);">n</i><i style="left:919.43px;top:515.21px;color:#ff6a6a;text-shadow:0.3px 0 0 #ff6a6a;transform:scale(0.850,1.450);">&gt;</i>
<i style="left:564.65px;top:532.31px;color:#8b1a1a;">0</i><i style="left:573.55px;top:532.31px;color:#8b1a1a;">x</i><i style="left:582.45px;top:532.31px;color:#8b1a1a;">4</i><i style="left:591.35px;top:532.31px;color:#8b1a1a;">0</i><i style="left:600.25px;top:532.31px;color:#8b1a1a;">1</i><i style="left:609.15px;top:532.31px;color:#8b1a1a;">5</i><i style="left:618.54px;top:532.31px;color:#8b1a1a;transform:scale(1.105,1.000);">e</i><i style="left:626.95px;top:532.31px;color:#8b1a1a;">0</i><i style="left:708.29px;top:532.31px;color:#00009c;text-shadow:0.4px 0 0 #00009c;transform:scale(1.216,1.000);">c</i><i style="left:718.08px;top:532.31px;color:#00009c;text-shadow:0.4px 0 0 #00009c;transform:scale(1.216,1.000);">a</i><i style="left:729.33px;top:532.31px;color:#00009c;text-shadow:0.4px 0 0 #00009c;transform:scale(1.300,1.000);">l</i><i style="left:739.12px;top:532.31px;color:#00009c;text-shadow:0.4px 0 0 #00009c;transform:scale(1.300,1.000);">l</i><i style="left:772.55px;top:532.31px;color:#7a1414;">0</i><i style="left:781.45px;top:532.31px;color:#7a1414;">x</i><i style="left:790.35px;top:532.31px;color:#7a1414;">4</i><i style="left:799.25px;top:532.31px;color:#7a1414;">0</i><i style="left:808.15px;top:532.31px;color:#7a1414;">1</i><i style="left:817.05px;top:532.31px;color:#7a1414;">5</i><i style="left:826.44px;top:532.31px;color:#7a1414;transform:scale(1.105,1.000);">c</i><i style="left:834.85px;top:532.31px;color:#7a1414;">0</i><i style="left:852.99px;top:532.21px;color:#ff6a6a;text-shadow:0.3px 0 0 #ff6a6a;transform:scale(0.850,1.450);">&lt;</i><i style="left:862.49px;top:532.31px;color:#00009c;text-shadow:0.4px 0 0 #00009c;transform:scale(1.216,1.000);">a</i><i style="left:871.78px;top:532.31px;color:#00009c;text-shadow:0.4px 0 0 #00009c;transform:scale(1.079,1.000);">d</i><i style="left:881.57px;top:532.31px;color:#00009c;text-shadow:0.4px 0 0 #00009c;transform:scale(1.079,1.000);">d</i><i style="left:890.06px;top:532.21px;color:#ff6a6a;text-shadow:0.3px 0 0 #ff6a6a;transform:scale(0.850,1.450);">&gt;</i>
<i style="left:564.65px;top:550.31px;color:#8b1a1a;">0</i><i style="left:573.55px;top:550.31px;color:#8b1a1a;">x</i><i style="left:582.45px;top:550.31px;color:#8b1a1a;">4</i><i style="left:591.35px;top:550.31px;color:#8b1a1a;">0</i><i style="left:600.25px;top:550.31px;color:#8b1a1a;">1</i><i style="left:609.15px;top:550.31px;color:#8b1a1a;">5</i><i style="left:618.54px;top:550.31px;color:#8b1a1a;transform:scale(1.105,1.000);">e</i><i style="left:626.95px;top:550.31px;color:#8b1a1a;">5</i><i style="left:705.35px;top:550.31px;color:#00009c;text-shadow:0.4px 0 0 #00009c;transform:scale(0.715,1.000);">m</i><i style="left:717.58px;top:550.31px;color:#00009c;text-shadow:0.4px 0 0 #00009c;transform:scale(1.079,1.000);">o</i><i style="left:727.37px;top:550.31px;color:#00009c;text-shadow:0.4px 0 0 #00009c;transform:scale(1.079,1.000);">v</i><i style="left:773.04px;top:550.31px;color:#e6ac38;transform:scale(1.105,1.000);">e</i><i style="left:781.94px;top:550.31px;color:#e6ac38;transform:scale(1.105,1.000);">a</i><i style="left:790.35px;top:550.31px;color:#e6ac38;">x</i><i style="left:799.45px;top:550.31px;color:#ff2020;transform:scale(1.250,1.100);">,</i><i style="left:808.15px;top:550.31px;color:#7a1414;">0</i><i style="left:817.05px;top:550.31px;color:#7a1414;">x</i><i style="left:825.95px;top:550.31px;color:#7a1414;">0</i>
<i style="left:564.65px;top:568.31px;color:#8b1a1a;">0</i><i style="left:573.55px;top:568.31px;color:#8b1a1a;">x</i><i style="left:582.45px;top:568.31px;color:#8b1a1a;">4</i><i style="left:591.35px;top:568.31px;color:#8b1a1a;">0</i><i style="left:600.25px;top:568.31px;color:#8b1a1a;">1</i><i style="left:609.15px;top:568.31px;color:#8b1a1a;">5</i><i style="left:618.54px;top:568.31px;color:#8b1a1a;transform:scale(1.105,1.000);">e</i><i style="left:627.44px;top:568.31px;color:#8b1a1a;transform:scale(1.105,1.000);">a</i><i style="left:709.75px;top:568.31px;color:#00009c;text-shadow:0.4px 0 0 #00009c;transform:scale(1.300,1.000);">l</i><i style="left:718.08px;top:568.31px;color:#00009c;text-shadow:0.4px 0 0 #00009c;transform:scale(1.216,1.000);">e</i><i style="left:727.87px;top:568.31px;color:#00009c;text-shadow:0.4px 0 0 #00009c;transform:scale(1.216,1.000);">a</i><i style="left:737.16px;top:568.31px;color:#00009c;text-shadow:0.4px 0 0 #00009c;transform:scale(1.079,1.000);">v</i><i style="left:747.45px;top:568.31px;color:#00009c;text-shadow:0.4px 0 0 #00009c;transform:scale(1.216,1.000);">e</i>
<i style="left:564.65px;top:586.31px;color:#8b1a1a;">0</i><i style="left:573.55px;top:586.31px;color:#8b1a1a;">x</i><i style="left:582.45px;top:586.31px;color:#8b1a1a;">4</i><i style="left:591.35px;top:586.31px;color:#8b1a1a;">0</i><i style="left:600.25px;top:586.31px;color:#8b1a1a;">1</i><i style="left:609.15px;top:586.31px;color:#8b1a1a;">5</i><i style="left:618.54px;top:586.31px;color:#8b1a1a;transform:scale(1.105,1.000);">e</i><i style="left:626.95px;top:586.31px;color:#8b1a1a;">b</i><i style="left:709.26px;top:586.31px;color:#00009c;text-shadow:0.4px 0 0 #00009c;transform:scale(1.300,1.000);">r</i><i style="left:718.08px;top:586.31px;color:#00009c;text-shadow:0.4px 0 0 #00009c;transform:scale(1.216,1.000);">e</i><i style="left:729.33px;top:586.31px;color:#00009c;text-shadow:0.4px 0 0 #00009c;transform:scale(1.300,1.000);">t</i>
</body></html>
